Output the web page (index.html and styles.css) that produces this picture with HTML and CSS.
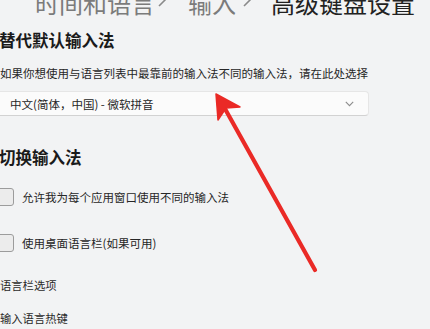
FILE: index.html
```html
<!DOCTYPE html>
<html lang="zh-CN">
<head>
<meta charset="utf-8">
<link rel="stylesheet" href="styles.css">
</head>
<body>
<div class="page">
  <div class="title">
    <span class="crumb">时间和语言</span>
    <span class="sep sep1"><svg width="10" height="14" viewBox="0 0 10 14"><polyline points="2,1 8,7 2,13" fill="none" stroke="#8a8a8a" stroke-width="1.6"/></svg></span>
    <span class="crumb">输入</span>
    <span class="sep sep2"><svg width="10" height="14" viewBox="0 0 10 14"><polyline points="2,1 8,7 2,13" fill="none" stroke="#8a8a8a" stroke-width="1.6"/></svg></span>
    <span class="crumb current">高级键盘设置</span>
  </div>

  <h2 class="heading first">替代默认输入法</h2>
  <p class="desc">如果你想使用与语言列表中最靠前的输入法不同的输入法，请在此处选择</p>
  <div class="select">
    <span class="select-text">中文(简体，中国) - 微软拼音</span>
    <svg class="chev" width="9" height="6" viewBox="0 0 9 6"><polyline points="0.8,0.8 4.5,4.6 8.2,0.8" fill="none" stroke="#8c8c8c" stroke-width="1.1"/></svg>
  </div>

  <h2 class="heading second">切换输入法</h2>
  <label class="check row1"><span class="box"></span><span class="check-label">允许我为每个应用窗口使用不同的输入法</span></label>
  <label class="check row2"><span class="box"></span><span class="check-label">使用桌面语言栏(如果可用)</span></label>

  <div class="link l1">语言栏选项</div>
  <div class="link l2">输入语言热键</div>

  <svg class="arrow" width="430" height="329" viewBox="0 0 430 329">
    <line x1="315" y1="270" x2="224" y2="107" stroke="#ea2a26" stroke-width="4.2" stroke-linecap="round"/>
    <polygon points="216,94 240,107 226,108 218,120" fill="#ea2a26" stroke="#ea2a26" stroke-width="1.5" stroke-linejoin="round"/>
  </svg>
</div>
</body>
</html>
```

FILE: styles.css
```css
html, body {
  margin: 0;
  padding: 0;
}
body {
  background: #f2f3f4;
  width: 430px;
  height: 329px;
  overflow: hidden;
  font-family: "Noto Sans CJK SC", "Noto Sans", sans-serif;
  color: #1b1b1b;
}
.page {
  position: relative;
  width: 430px;
  height: 329px;
  overflow: hidden;
}
.title {
  margin-top: -9px;
  height: 24px;
  line-height: 24px;
  font-size: 24px;
  white-space: nowrap;
  padding-left: 35px;
  display: flex;
  align-items: center;
  color: #7b7b7b;
}
.crumb {
  display: inline-block;
}
.crumb.current {
  color: #222;
}
.sep {
  display: inline-flex;
  align-items: center;
  height: 24px;
}
.sep1 {
  width: 33px;
  padding-left: 2px;
  box-sizing: border-box;
  margin-top: -6px;
}
.sep2 {
  width: 35px;
  padding-left: 6px;
  box-sizing: border-box;
  margin-top: -6px;
}
.heading {
  margin: 0;
  font-size: 16.5px;
  line-height: 17px;
  font-weight: 600;
  color: #1a1a1a;
  margin-left: -1px;
  white-space: nowrap;
}
.heading.first {
  margin-top: 17px;
}
.heading.second {
  margin-top: 33px;
}
.desc {
  margin: 18px 0 0 0;
  font-size: 11.5px;
  line-height: 13px;
  color: #262626;
  white-space: nowrap;
}
.select {
  margin-top: 11px;
  margin-left: -3px;
  width: 372px;
  height: 25px;
  box-sizing: border-box;
  background: #fbfbfb;
  border: 1px solid #e6e6e6;
  border-bottom-color: #d2d2d2;
  border-radius: 4px;
  display: flex;
  align-items: center;
  justify-content: space-between;
  padding: 0 14px 0 12px;
}
.select-text {
  font-size: 11.5px;
  color: #262626;
  white-space: nowrap;
}
.chev {
  display: block;
}
.check {
  display: flex;
  align-items: center;
  height: 18px;
  margin-left: -4px;
}
.row1 {
  margin-top: 22px;
}
.row2 {
  margin-top: 28px;
}
.box {
  width: 18px;
  height: 18px;
  box-sizing: border-box;
  border: 1px solid #9c9c9c;
  border-radius: 3px;
  background: #ececec;
  flex: none;
}
.check-label {
  margin-left: 8px;
  font-size: 11.5px;
  color: #262626;
  white-space: nowrap;
}
.link {
  font-size: 11.3px;
  line-height: 14px;
  color: #2a2a2a;
  white-space: nowrap;
}
.l1 {
  margin-top: 26px;
}
.l2 {
  margin-top: 19px;
}
.arrow {
  position: absolute;
  left: 0;
  top: 0;
  pointer-events: none;
}
```
